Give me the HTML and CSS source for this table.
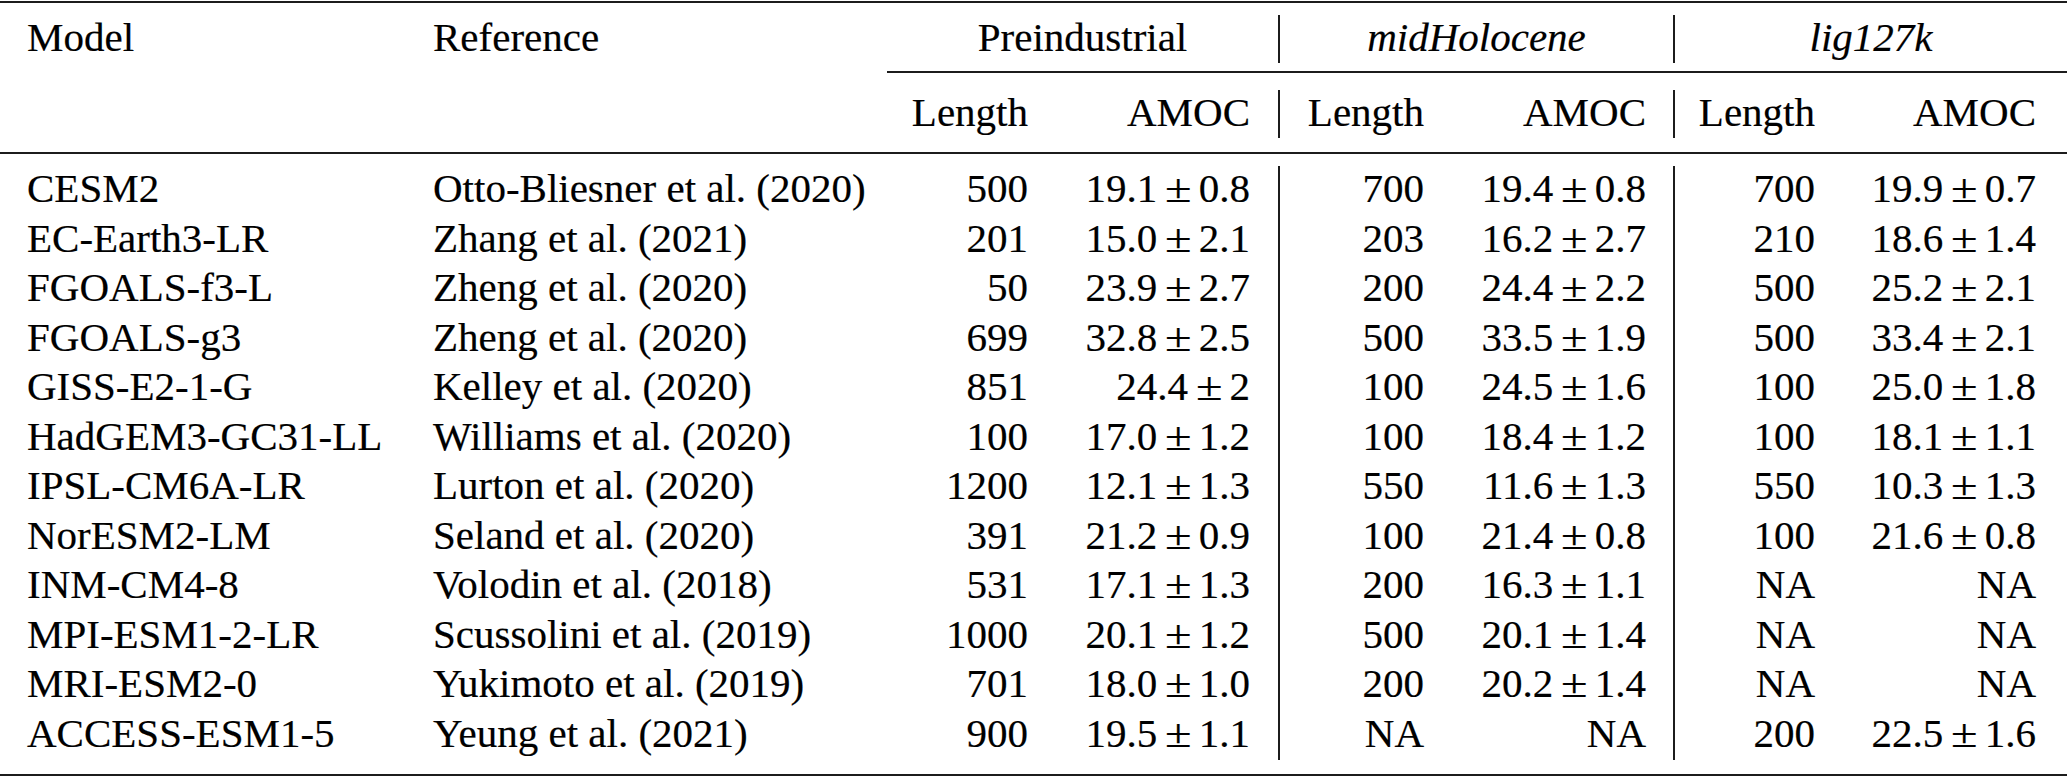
FILE: index.html
```html
<!DOCTYPE html>
<html lang="en">
<head>
<meta charset="utf-8">
<title>AMOC table</title>
<link rel="stylesheet" href="styles.css">
</head>
<body>
<table class="tab">
  <colgroup>
    <col class="c1"><col class="c2"><col class="c3"><col class="c4"><col class="c5"><col class="c6"><col class="c7"><col class="c8">
  </colgroup>
  <thead>
    <tr class="rule"><td colspan="8"></td></tr>
    <tr class="gap g12"><td colspan="8"></td></tr>
    <tr class="row hrow">
      <td class="txt first">Model</td>
      <td class="txt ref">Reference</td>
      <td class="grp bar" colspan="2">Preindustrial</td>
      <td class="grp bar it" colspan="2">midHolocene</td>
      <td class="grp it" colspan="2">lig127k</td>
    </tr>
    <tr class="gap g8"><td colspan="8"></td></tr>
    <tr class="cmid"><td colspan="2" class="blank"></td><td colspan="6" class="line"></td></tr>
    <tr class="gap g17"><td colspan="8"></td></tr>
    <tr class="row hrow">
      <td class="txt first"></td>
      <td class="txt ref"></td>
      <td class="num n3">Length</td>
      <td class="num n4 bar">AMOC</td>
      <td class="num n5">Length</td>
      <td class="num n6 bar">AMOC</td>
      <td class="num n7">Length</td>
      <td class="num n8">AMOC</td>
    </tr>
    <tr class="gap g14"><td colspan="8"></td></tr>
    <tr class="rule"><td colspan="8"></td></tr>
    <tr class="gap g12"><td colspan="8"></td></tr>
  </thead>
  <tbody>
    <tr class="row drow"><td class="txt first">CESM2</td><td class="txt ref">Otto-Bliesner et al. (2020)</td><td class="num n3">500</td><td class="num n4 bar">19.1<span class="pm">±</span>0.8</td><td class="num n5">700</td><td class="num n6 bar">19.4<span class="pm">±</span>0.8</td><td class="num n7">700</td><td class="num n8">19.9<span class="pm">±</span>0.7</td></tr>
    <tr class="row drow"><td class="txt first">EC-Earth3-LR</td><td class="txt ref">Zhang et al. (2021)</td><td class="num n3">201</td><td class="num n4 bar">15.0<span class="pm">±</span>2.1</td><td class="num n5">203</td><td class="num n6 bar">16.2<span class="pm">±</span>2.7</td><td class="num n7">210</td><td class="num n8">18.6<span class="pm">±</span>1.4</td></tr>
    <tr class="row drow"><td class="txt first">FGOALS-f3-L</td><td class="txt ref">Zheng et al. (2020)</td><td class="num n3">50</td><td class="num n4 bar">23.9<span class="pm">±</span>2.7</td><td class="num n5">200</td><td class="num n6 bar">24.4<span class="pm">±</span>2.2</td><td class="num n7">500</td><td class="num n8">25.2<span class="pm">±</span>2.1</td></tr>
    <tr class="row drow"><td class="txt first">FGOALS-g3</td><td class="txt ref">Zheng et al. (2020)</td><td class="num n3">699</td><td class="num n4 bar">32.8<span class="pm">±</span>2.5</td><td class="num n5">500</td><td class="num n6 bar">33.5<span class="pm">±</span>1.9</td><td class="num n7">500</td><td class="num n8">33.4<span class="pm">±</span>2.1</td></tr>
    <tr class="row drow"><td class="txt first">GISS-E2-1-G</td><td class="txt ref">Kelley et al. (2020)</td><td class="num n3">851</td><td class="num n4 bar">24.4<span class="pm">±</span>2</td><td class="num n5">100</td><td class="num n6 bar">24.5<span class="pm">±</span>1.6</td><td class="num n7">100</td><td class="num n8">25.0<span class="pm">±</span>1.8</td></tr>
    <tr class="row drow"><td class="txt first">HadGEM3-GC31-LL</td><td class="txt ref">Williams et al. (2020)</td><td class="num n3">100</td><td class="num n4 bar">17.0<span class="pm">±</span>1.2</td><td class="num n5">100</td><td class="num n6 bar">18.4<span class="pm">±</span>1.2</td><td class="num n7">100</td><td class="num n8">18.1<span class="pm">±</span>1.1</td></tr>
    <tr class="row drow"><td class="txt first">IPSL-CM6A-LR</td><td class="txt ref">Lurton et al. (2020)</td><td class="num n3">1200</td><td class="num n4 bar">12.1<span class="pm">±</span>1.3</td><td class="num n5">550</td><td class="num n6 bar">11.6<span class="pm">±</span>1.3</td><td class="num n7">550</td><td class="num n8">10.3<span class="pm">±</span>1.3</td></tr>
    <tr class="row drow"><td class="txt first">NorESM2-LM</td><td class="txt ref">Seland et al. (2020)</td><td class="num n3">391</td><td class="num n4 bar">21.2<span class="pm">±</span>0.9</td><td class="num n5">100</td><td class="num n6 bar">21.4<span class="pm">±</span>0.8</td><td class="num n7">100</td><td class="num n8">21.6<span class="pm">±</span>0.8</td></tr>
    <tr class="row drow"><td class="txt first">INM-CM4-8</td><td class="txt ref">Volodin et al. (2018)</td><td class="num n3">531</td><td class="num n4 bar">17.1<span class="pm">±</span>1.3</td><td class="num n5">200</td><td class="num n6 bar">16.3<span class="pm">±</span>1.1</td><td class="num n7">NA</td><td class="num n8">NA</td></tr>
    <tr class="row drow"><td class="txt first">MPI-ESM1-2-LR</td><td class="txt ref">Scussolini et al. (2019)</td><td class="num n3">1000</td><td class="num n4 bar">20.1<span class="pm">±</span>1.2</td><td class="num n5">500</td><td class="num n6 bar">20.1<span class="pm">±</span>1.4</td><td class="num n7">NA</td><td class="num n8">NA</td></tr>
    <tr class="row drow"><td class="txt first">MRI-ESM2-0</td><td class="txt ref">Yukimoto et al. (2019)</td><td class="num n3">701</td><td class="num n4 bar">18.0<span class="pm">±</span>1.0</td><td class="num n5">200</td><td class="num n6 bar">20.2<span class="pm">±</span>1.4</td><td class="num n7">NA</td><td class="num n8">NA</td></tr>
    <tr class="row drow"><td class="txt first">ACCESS-ESM1-5</td><td class="txt ref">Yeung et al. (2021)</td><td class="num n3">900</td><td class="num n4 bar">19.5<span class="pm">±</span>1.1</td><td class="num n5">NA</td><td class="num n6 bar">NA</td><td class="num n7">200</td><td class="num n8">22.5<span class="pm">±</span>1.6</td></tr>
    <tr class="gap g14"><td colspan="8"></td></tr>
    <tr class="rule"><td colspan="8"></td></tr>
  </tbody>
</table>
</body>
</html>
```

FILE: styles.css
```css
html, body {
  margin: 0;
  padding: 0;
  background: #ffffff;
}

body {
  font-family: "Liberation Serif", "Times New Roman", serif;
  font-size: 41px;
  color: #000;
  -webkit-text-stroke: 0.2px #000;
}

.tab {
  margin-top: 1px;
  width: 2067px;
  table-layout: fixed;
  border-collapse: separate;
  border-spacing: 0;
}

.c1 { width: 407px; }
.c2 { width: 480px; }
.c3 { width: 167px; }
.c4 { width: 226px; }
.c5 { width: 170px; }
.c6 { width: 225px; }
.c7 { width: 166px; }
.c8 { width: 226px; }

.tab td {
  padding: 0;
  white-space: nowrap;
}

/* rules (booktabs style) */
.rule td {
  height: 2px;
  background: #1c1c1c;
  font-size: 0;
  line-height: 0;
}

.cmid td {
  height: 2px;
  font-size: 0;
  line-height: 0;
}
.cmid .line { background: #1c1c1c; }

.gap td {
  font-size: 0;
  line-height: 0;
}
.g8 td { height: 8px; }
.g12 td { height: 12px; }
.g14 td { height: 14px; }
.g17 td { height: 17px; }

/* content rows */
.row td {
  vertical-align: top;
  line-height: 45px;
}
.hrow td { height: 48px; }
.drow td { height: 49.5px; }

.first { padding-left: 27px !important; text-align: left; }
.ref { padding-left: 26px !important; text-align: left; }

.num { text-align: right; }
.n3 { padding-right: 26px !important; }
.n4 { padding-right: 28px !important; }
.n5 { padding-right: 26px !important; }
.n6 { padding-right: 27px !important; }
.n7 { padding-right: 26px !important; }
.n8 { padding-right: 31px !important; }

.grp { text-align: center; }
.it { font-style: italic; }

.bar { border-right: 2px solid #1c1c1c; }

.pm {
  display: inline-block;
  margin: 0 9px 0 10px;
  transform: scaleX(1.18);
}
```
